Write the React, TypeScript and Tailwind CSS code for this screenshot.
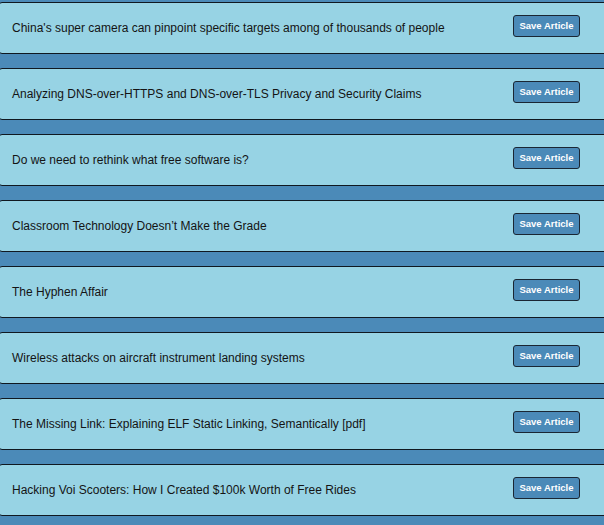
import React from "react";

const titles = [
  "China's super camera can pinpoint specific targets among of thousands of people",
  "Analyzing DNS-over-HTTPS and DNS-over-TLS Privacy and Security Claims",
  "Do we need to rethink what free software is?",
  "Classroom Technology Doesn\u2019t Make the Grade",
  "The Hyphen Affair",
  "Wireless attacks on aircraft instrument landing systems",
  "The Missing Link: Explaining ELF Static Linking, Semantically [pdf]",
  "Hacking Voi Scooters: How I Created $100k Worth of Free Rides",
];

export default function App() {
  return (
    <div
      className="w-[604px] h-[525px] overflow-hidden bg-[#4b8ab8] pt-[2px]"
      style={{ fontFamily: '"Liberation Sans", Arial, sans-serif' }}
    >
      <div className="flex flex-col gap-[14px]">
        {titles.map((t) => (
          <div
            key={t}
            className="ml-[-2px] w-[616px] h-[52px] flex items-center border border-[#101820] rounded-[4px] bg-[#97d3e4] pl-[13px] pr-[33px]"
          >
            <span className="flex-1 text-[12px] text-[#141414] leading-none">{t}</span>
            <button className="self-start mt-[12px] w-[67px] h-[22px] rounded-[3px] border border-[#1a2633] bg-[#4b8ab8] text-white text-[9.5px] font-bold leading-none flex items-center justify-center">
              Save Article
            </button>
          </div>
        ))}
      </div>
    </div>
  );
}
